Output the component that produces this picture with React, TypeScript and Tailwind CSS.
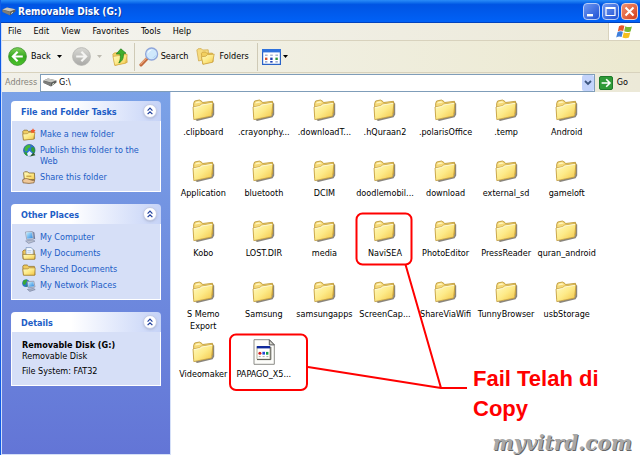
import React, { useState } from 'react';

interface Task {
  label: string;
  icon: React.ReactNode;
}

interface PanelProps {
  title: string;
  children: React.ReactNode;
}

interface FileEntry {
  name: string;
  kind?: 'folder' | 'app';
}

const files: FileEntry[] = [
  { name: '.clipboard' },
  { name: '.crayonphy...' },
  { name: '.downloadT...' },
  { name: '.hQuraan2' },
  { name: '.polarisOffice' },
  { name: '.temp' },
  { name: 'Android' },
  { name: 'Application' },
  { name: 'bluetooth' },
  { name: 'DCIM' },
  { name: 'doodlemobil...' },
  { name: 'download' },
  { name: 'external_sd' },
  { name: 'gameloft' },
  { name: 'Kobo' },
  { name: 'LOST.DIR' },
  { name: 'media' },
  { name: 'NaviSEA' },
  { name: 'PhotoEditor' },
  { name: 'PressReader' },
  { name: 'quran_android' },
  { name: 'S Memo Export' },
  { name: 'Samsung' },
  { name: 'samsungapps' },
  { name: 'ScreenCap...' },
  { name: 'ShareViaWifi' },
  { name: 'TunnyBrowser' },
  { name: 'usbStorage' },
  { name: 'Videomaker' },
  { name: 'PAPAGO_X5...', kind: 'app' },
];

const menus = ['File', 'Edit', 'View', 'Favorites', 'Tools', 'Help'];

// gradients shared by every icon on the page
const IconDefs = () => (
  <svg width="0" height="0" className="absolute" aria-hidden="true">
    <defs>
      <linearGradient id="folderFront" x1="0" y1="0" x2="1" y2="1">
        <stop offset="0" stopColor="#fffbc4" />
        <stop offset="0.5" stopColor="#fdea88" />
        <stop offset="1" stopColor="#f2c344" />
      </linearGradient>
      <linearGradient id="greenBall" x1="0" y1="0" x2="0" y2="1">
        <stop offset="0" stopColor="#7fd35a" />
        <stop offset="0.5" stopColor="#36a81f" />
        <stop offset="1" stopColor="#4cc42c" />
      </linearGradient>
      <linearGradient id="greyBall" x1="0" y1="0" x2="0" y2="1">
        <stop offset="0" stopColor="#d8d8d4" />
        <stop offset="1" stopColor="#a9a9a6" />
      </linearGradient>
      <linearGradient id="screen" x1="0" y1="0" x2="1" y2="1">
        <stop offset="0" stopColor="#c4f0ff" />
        <stop offset="1" stopColor="#2a86e0" />
      </linearGradient>
    </defs>
  </svg>
);

const FolderIcon = () => (
  <svg width="23" height="22" viewBox="0 0 23 22">
    <path d="M3 20.5 20 16.5 21 4 22.2 4.500 22.2 15.500 20.6 18.2 5 21.900z" fill="#6b675e" opacity="0.8" />
    <path d="M1.6 4.500 2.6 2 7.500 1 10 2.500 10.500 3.500 20.500 2.3 20.700 14 2 18z" fill="#f5d978" stroke="#b8922f" strokeWidth="0.8" />
    <path d="M3.2 4.500 3.800 3 7 2.3 9 3.500z" fill="#fff6c0" />
    <path d="M1 8 7.500 6.800 9.500 5.200 21 3.400 19.600 17 1.800 20.600z" fill="url(#folderFront)" stroke="#c29b38" strokeWidth="0.8" />
    <path d="M1.800 8.600 7.800 7.400 9.800 5.900 20 4.300" fill="none" stroke="#fffde4" strokeWidth="0.8" />
  </svg>
);

const AppFileIcon = () => (
  <svg width="22" height="26" viewBox="0 0 22 26">
    <path d="M1 .7h15.5l4.8 5v19.6H1z" fill="#fdfdfa" stroke="#8d8d88" />
    <path d="M16.3.8v5.1h5z" fill="#d4d4cc" stroke="#4f4f4f" strokeWidth="0.9" />
    <path d="M4 7.5h13v12.7H4z" fill="#fff" stroke="#b4b19c" />
    <path d="M3.8 7h13.4v2.4H3.8z" fill="#102a9c" />
    <path d="M4 20.6h13.8V8" fill="none" stroke="#56564e" />
    <circle cx="6.9" cy="14.3" r="1.5" fill="#d21f1f" />
    <path d="M9.4 12.8h2.6v2.8H9.4z" fill="#2346d8" />
    <path d="M13 12.9h2.4v2.8H13z" fill="#159a4a" />
    <path d="M5.7 17.6h2M9.6 17.6h2M13.4 17.6h2" stroke="#999" strokeWidth="0.8" />
  </svg>
);

const DriveIcon = () => (
  <svg width="14" height="9" viewBox="0 0 14 9">
    <path d="M.5 2.6 5 .6l8.5 1.8v2L8 8.4.5 4.8z" fill="#5e5e5c" />
    <path d="M.5 2.5 5 .5l8.5 1.8L8 4.6z" fill="#c6c6c1" />
    <path d="M.5 2.8 8 4.9v3.4L.5 5z" fill="#7d7d7a" />
    <path d="m9 6.6 2-1.4" stroke="#d9e8d0" strokeWidth="0.9" />
  </svg>
);

const BackIcon = () => (
  <svg width="19" height="19" viewBox="0 0 19 19">
    <circle cx="9.5" cy="9.5" r="8.9" fill="url(#greenBall)" stroke="#3b8f2d" strokeWidth="0.8" />
    <path d="M14.8 9.5H5.4M9.6 4.8 4.9 9.5l4.7 4.7" fill="none" stroke="#fff" strokeWidth="2.2" />
  </svg>
);

const ForwardIcon = () => (
  <svg width="19" height="19" viewBox="0 0 19 19">
    <circle cx="9.5" cy="9.5" r="8.9" fill="url(#greyBall)" stroke="#b5b5b1" strokeWidth="0.8" />
    <path d="M4.2 9.5h9.4M9.4 4.8l4.7 4.7-4.7 4.7" fill="none" stroke="#f4f4f2" strokeWidth="2.2" />
  </svg>
);

const UpIcon = () => (
  <svg width="16" height="18" viewBox="0 0 16 18">
    <path d="M.8 6.5 2 5l3-.4 1.2 1.2L14.6 6l.6 8.4L3 17.4z" fill="#f3d266" stroke="#cfa23a" strokeWidth="0.7" />
    <path d="M1 8.5 9 7.2l6.2-.6-1.5 8.6L2.7 17.3z" fill="url(#folderFront)" stroke="#cfa23a" strokeWidth="0.6" />
    <path d="M4.2 6 8.8.8 14 5.2l-2.6.4c.3 4.2-.8 7.6-4.6 9.4 1.6-2.6 1.9-5.6 1.3-9z" fill="#3fae2d" stroke="#1f7d1a" strokeWidth="0.7" />
  </svg>
);

const SearchIcon = () => (
  <svg width="20" height="20" viewBox="0 0 20 20">
    <path d="M2 17.8 8 11.6" stroke="#c2693c" strokeWidth="3.2" strokeLinecap="round" />
    <path d="m1.8 17 6-6.2" stroke="#eba77c" strokeWidth="1.2" strokeLinecap="round" />
    <circle cx="12.6" cy="7" r="6" fill="#cfe8fc" stroke="#8fa6da" strokeWidth="1.3" />
    <path d="M8.6 7c0-3 2.4-4.6 5-4.2-2 .6-4 2-5 4.2z" fill="#fff" />
    <path d="M16.8 7.6c-.2 2-1.9 3.6-4 3.6 2-.8 3-1.8 4-3.6z" fill="#94c4ee" />
  </svg>
);

const FoldersIcon = () => (
  <svg width="19" height="17" viewBox="0 0 19 17">
    <path d="M.8 2 2 .8l3.2-.2L6.6 2l5.6-.2.6 8.400L2.6 13z" fill="#f6dc80" stroke="#cda646" strokeWidth="0.7" />
    <path d="m5.4 5.6 1-1.4 3.2-.2 1.2 1.3 5.6-.2.8 8.4-10.4 2.6z" fill="#f2d060" stroke="#c79b38" strokeWidth="0.7" />
    <path d="m5.4 8.8 4.4-.6 1.6-1.5 6.8-.6-1.6 8.2-9.6 2z" fill="url(#folderFront)" stroke="#c79b38" strokeWidth="0.7" />
  </svg>
);

const ViewsIcon = () => (
  <svg width="19" height="16" viewBox="0 0 19 16">
    <path d="M.6.6h17.8v14.8H.6z" fill="#fff" stroke="#2a63c8" strokeWidth="1.2" />
    <path d="M0 0h19v3.4H0z" fill="#2f72dc" />
    <path d="M3 5.4h2.6V7H3zM8.2 5.4h2.6V7H8.2zM13.4 5.4H16V7h-2.6z" fill="#a9b7d4" />
    <path d="M3 8.6h2.4V11H3z" fill="#d9502c" />
    <path d="M8.2 8.6h2.4V11H8.2z" fill="#1e3fb2" />
    <path d="M13.4 8.6h2.4V11h-2.4z" fill="#2c9a3c" />
    <path d="M3 12.2h2.4v1.4H3zM13.4 12.2h2.4v1.4h-2.4z" fill="#7d93c4" />
    <path d="M8.2 12h2.4v1.6H8.2z" fill="#1e3fb2" />
  </svg>
);

const WindowsFlag = () => (
  <svg width="17" height="16" viewBox="0 0 17 16">
    <path d="M3 2.2C5 .8 6.6.9 8.4 1.8L7.2 7C5.4 6.2 3.8 6.2 1.8 7.4z" fill="#e8562a" />
    <path d="M9.3 2.2c2 1 4 1.2 6.6.2l-1.3 5c-2.4 1-4.4.9-6.4-.1z" fill="#7ab833" />
    <path d="M1.5 8.2c2-1.2 3.6-1.3 5.4-.4L5.6 13c-1.8-.9-3.4-.8-5.4.4z" fill="#3f7fdc" />
    <path d="M7.8 8.2c2 1 4 1.2 6.5.2L13 13.6c-2.4 1-4.500.9-6.500-.1z" fill="#f6bf1d" />
  </svg>
);

const GoIcon = () => (
  <svg width="14" height="14" viewBox="0 0 14 14">
    <rect x="0.5" y="0.5" width="13" height="13" rx="1.5" fill="#2f9a38" stroke="#1d7a2a" />
    <path d="M2.6 7h8M7.2 3.2 11 7l-3.8 3.8" fill="none" stroke="#fff" strokeWidth="1.6" />
  </svg>
);

const Caret = ({ className = 'fill-black' }: { className?: string }) => (
  <svg width="5" height="3" viewBox="0 0 5 3" className={className}>
    <path d="M0 0h5L2.5 3z" />
  </svg>
);

const NewFolderIcon = () => (
  <svg width="14" height="13" viewBox="0 0 14 13">
    <path d="M.8 3.4 2 2.2h3.2l1.2 1.2H12l.4 7.4L1.4 12z" fill="#f0cc62" stroke="#8d6e28" strokeWidth="0.8" />
    <path d="m.8 6 4.6-.4L7 4.4l6-.2-1.4 7L1.6 12z" fill="url(#folderFront)" stroke="#a5802f" strokeWidth="0.6" />
    <path d="m11 .2.8 1.6 1.8.4-1.4 1.2.2 1.8L11 4.4l-1.8.8.4-1.8L8.4 2.2l1.8-.4z" fill="#f0582a" />
  </svg>
);

const GlobeIcon = () => (
  <svg width="13" height="13" viewBox="0 0 13 13">
    <circle cx="6.3" cy="6.2" r="5.7" fill="#2b74d4" stroke="#1d4f8d" strokeWidth="0.7" />
    <path d="M2 3.2C3.4 1.2 5.6.8 7.6 1.2L7 3.4 5 4.6l-.4 2.2-2.2.8C1.2 6 1.4 4.4 2 3.2z" fill="#45b83a" />
    <path d="m8.6 3 2.4.4c1 1.6 1.2 3.6.4 5.4l-1.6-.4L8 6.2z" fill="#2f9e33" />
    <path d="M4 9.4 6.4 7l3 2.6-1.6 2.2-3 .2z" fill="#e6efff" />
    <path d="M1 8.400 3.6 8l1 3.800C2.800 11.400 1.600 10 1 8.400z" fill="#2f9e33" />
    <path d="m7 12.4 5.4-1.2-2-2.8z" fill="#2d5e2c" />
  </svg>
);

const ShareFolderIcon = () => (
  <svg width="14" height="13" viewBox="0 0 14 13">
    <path d="M1.6 1.8 2.6.8h3l1.2 1.2h5.6l.4 6.4-10.4.8z" fill="url(#folderFront)" stroke="#7d6328" strokeWidth="0.8" />
    <path d="M.6 8.8c2-1.2 3.6-1.6 5-1l5.4 1.8 1.6-.6-.6 2.8-5 .6-6-.6z" fill="#f0c99a" stroke="#7a5528" strokeWidth="0.7" />
    <path d="M4.4 5.2h5" stroke="#b98c34" />
  </svg>
);

const ComputerIcon = () => (
  <svg width="13" height="13" viewBox="0 0 13 13">
    <path d="m2.4 1 7-.6 1.4 7.4-7 1z" fill="#d9dce4" stroke="#8b93a8" strokeWidth="0.7" />
    <path d="m3.2 1.6 5.6-.4 1 5.800-5.600.8z" fill="url(#screen)" />
    <path d="m10 .8 1.4.8.8 6.6-1.4-.4z" fill="#707c9c" />
    <path d="m2.6 10 7.4-1.2 2 1.4-6.4 2.2z" fill="#b9bfcf" stroke="#7b86a2" strokeWidth="0.6" />
  </svg>
);

const DocumentsIcon = () => (
  <svg width="14" height="13" viewBox="0 0 14 13">
    <path d="M.8 4.2 2 3h10l1 8.8H1z" fill="#eec75c" stroke="#94752c" strokeWidth="0.8" />
    <path d="M4 .6h5l2.2 2V9H4z" fill="#f6fbff" stroke="#6f8db8" strokeWidth="0.7" />
    <path d="M5.4 3.6h4M5.4 5.2h4" stroke="#9db9e2" strokeWidth="0.7" />
    <path d="M.8 7.4h12.4l-.6 4.9H1.4z" fill="url(#folderFront)" stroke="#94752c" strokeWidth="0.7" />
  </svg>
);

const SharedIcon = () => (
  <svg width="14" height="12" viewBox="0 0 14 12">
    <path d="m.8 2.4 1-1.4h3.4l1.4 1.4h5.8l.6 8.6H1.4z" fill="#efca5e" stroke="#94752c" strokeWidth="0.8" />
    <path d="m.8 5 5-.2L7.2 3.8h6l-.6 7.4H1.6z" fill="url(#folderFront)" stroke="#a5802f" strokeWidth="0.7" />
  </svg>
);

const NetworkIcon = () => (
  <svg width="14" height="13" viewBox="0 0 14 13">
    <circle cx="4" cy="4.2" r="3.8" fill="#2d74cf" />
    <path d="M.8 3C1.8.8 3.6.2 5.4.7L4.6 3l-1.4 2.8L1 5.4zM3 7l2.4-.8L5 7.8z" fill="#38a836" />
    <path d="m5.2 2.6 6.6-.4 1.2 5.8-6.6.8z" fill="#d9dce4" stroke="#8089a2" strokeWidth="0.7" />
    <path d="m6 3.2 5.200-.3.9 4.400-5.200.6z" fill="url(#screen)" />
    <path d="m5.4 10.4 6.2-1 1.6 1.2-5.4 1.8z" fill="#aab3ca" stroke="#6f7a98" strokeWidth="0.6" />
  </svg>
);

const folderTasks: Task[] = [
  { label: 'Make a new folder', icon: <NewFolderIcon /> },
  { label: 'Publish this folder to the Web', icon: <GlobeIcon /> },
  { label: 'Share this folder', icon: <ShareFolderIcon /> },
];

const places: Task[] = [
  { label: 'My Computer', icon: <ComputerIcon /> },
  { label: 'My Documents', icon: <DocumentsIcon /> },
  { label: 'Shared Documents', icon: <SharedIcon /> },
  { label: 'My Network Places', icon: <NetworkIcon /> },
];

const Panel: React.FC<PanelProps> = ({ title, children }) => {
  const [isOpen, setIsOpen] = useState(true);

  return (
    <section>
      <header className="flex h-5 items-center justify-between rounded-t-sm bg-linear-to-r from-white from-40% to-[#c6d3f7] pr-1 pl-2.5">
        <h2 className="pt-1 text-[9px] font-bold text-[#215dc6]">{title}</h2>
        <button
          aria-label={`Toggle ${title}`}
          onClick={() => setIsOpen(!isOpen)}
          className="flex size-3.5 items-center justify-center rounded-full border border-[#c3cbe6] bg-white shadow-sm"
        >
          <svg width="6" height="8" viewBox="0 0 6 8" fill="none" stroke="#1f3f9c" strokeWidth="1.2">
            <path d="M.6 3.6 3 1.2l2.4 2.4M.6 7.2 3 4.8l2.4 2.4" />
          </svg>
        </button>
      </header>
      {isOpen && <div className="border border-t-0 border-white bg-[#d6dff7]">{children}</div>}
    </section>
  );
};

const TaskList = ({ tasks }: { tasks: Task[] }) => (
  <ul className="flex flex-col gap-[5px] py-2 pl-2.5">
    {tasks.map(task => (
      <li key={task.label}>
        <a href="#" className="flex gap-1 leading-[11px] text-[#215dc6] hover:underline">
          <span className="flex h-[11px] w-3.5 shrink-0 items-center justify-center">{task.icon}</span>
          <span className="w-28">{task.label}</span>
        </a>
      </li>
    ))}
  </ul>
);

const TitleBar = () => (
  <header className="flex h-[23px] items-center justify-between bg-linear-to-b from-[#2a8cf8] via-[#0054e3] via-20% to-[#0062f8] pr-0.5 pl-px shadow-[inset_0_-1px_0_#0242bd]">
    <div className="flex items-center gap-0.5">
      <DriveIcon />
      <h1 className="text-[10px] font-bold text-white [text-shadow:1px_1px_0_#0f3a9a]">Removable Disk (G:)</h1>
    </div>
    <div className="flex gap-0.5 text-white">
      <button aria-label="Minimize" className="size-[17px] rounded-sm border border-[#b9cdf7] bg-linear-to-br from-[#6f97f0] to-[#1f4fd4]">
        <svg width="15" height="15" viewBox="0 0 15 15"><path d="M3 10h6v2.4H3z" fill="#fff" /></svg>
      </button>
      <button aria-label="Maximize" className="size-[17px] rounded-sm border border-[#b9cdf7] bg-linear-to-br from-[#6f97f0] to-[#1f4fd4]">
        <svg width="15" height="15" viewBox="0 0 15 15"><path d="M3 3.5h9v8H3zM3 4.5h9" fill="none" stroke="#fff" strokeWidth="1.2" /></svg>
      </button>
      <button aria-label="Close" className="size-[17px] rounded-sm border border-[#f3cfc6] bg-linear-to-br from-[#f0906e] to-[#d43a12]">
        <svg width="15" height="15" viewBox="0 0 15 15"><path d="m3.5 3.5 8 8m0-8-8 8" stroke="#fff" strokeWidth="2" /></svg>
      </button>
    </div>
  </header>
);

const MenuBar = () => (
  <nav className="flex h-[18px] items-stretch justify-between border-b border-[#d8d2bd] bg-linear-to-r from-[#f4f4f0] to-[#ece9d8]">
    <div className="flex items-center gap-3 pl-1.5">
      {menus.map(menu => (
        <button key={menu}>{menu}</button>
      ))}
    </div>
    <div className="flex w-8 items-center justify-center border-l border-[#d8d2bd] bg-white">
      <WindowsFlag />
    </div>
  </nav>
);

const Toolbar = () => (
  <div className="flex h-8 items-center border-b border-[#d8d2bd] bg-linear-to-r from-[#f4f4f0] to-[#ece9d0] pl-1.5">
    <button className="flex items-center gap-1"><BackIcon />Back</button>
    <button aria-label="Back history" className="px-1.5"><Caret /></button>
    <button aria-label="Forward" className="ml-1"><ForwardIcon /></button>
    <button aria-label="Forward history" className="px-1.5"><Caret className="fill-[#bdbab0]" /></button>
    <button aria-label="Up" className="ml-1 pr-1.5"><UpIcon /></button>
    <div className="flex h-7 items-center gap-2 border-x border-[#cfcab6] px-1">
      <button className="flex items-center gap-0.5"><SearchIcon />Search</button>
      <button className="flex items-center gap-1 pr-1"><FoldersIcon />Folders</button>
    </div>
    <button aria-label="Views" className="flex items-center gap-0.5 pl-1"><ViewsIcon /><Caret /></button>
  </div>
);

const AddressBar = () => {
  const [path, setPath] = useState('G:\\');

  return (
    <form className="flex h-[19px] items-center bg-linear-to-r from-[#f1f0e8] to-[#ece9d8]" onSubmit={e => e.preventDefault()}>
      <label htmlFor="address" className="w-[38px] pl-[3px] text-[#85837b]">Address</label>
      <div className="flex h-[18px] flex-1 items-center border border-[#7f9db9] bg-white pl-0.5">
        <DriveIcon />
        <input
          id="address"
          value={path}
          onChange={e => setPath(e.target.value)}
          className="min-w-0 flex-1 pl-0.5 outline-none"
        />
        <button type="button" aria-label="Show addresses" className="flex h-4 w-3 items-center justify-center rounded-xs bg-[#c3d3fb]">
          <svg width="8" height="6" viewBox="0 0 8 6"><path d="m1 1 3 3 3-3" fill="none" stroke="#3c5580" strokeWidth="1.8" /></svg>
        </button>
      </div>
      <button className="flex items-center gap-1 pr-3 pl-1"><GoIcon />Go</button>
    </form>
  );
};

const Callout = () => (
  <>
    <svg
      width="469"
      height="363"
      viewBox="171 92 469 363"
      fill="none"
      stroke="#f00"
      strokeWidth="2"
      className="pointer-events-none absolute top-0 left-0"
    >
      <rect x="356.5" y="213.5" width="55" height="51" rx="6" />
      <rect x="230" y="334.5" width="77" height="55.5" rx="6" />
      <path d="M405.500 264.500 441 388H467M308 367 441 388" />
    </svg>
    <p className="absolute top-[272px] left-[302px] w-36 font-['Liberation_Sans',Arial,sans-serif] text-[22px] leading-[30px] font-bold text-[#f00]">
      Fail Telah di Copy
    </p>
    <p className="absolute right-2 bottom-0 font-['DejaVu_Serif',serif] text-[20px] leading-6 font-bold text-[#a8a8a8] italic [text-shadow:1px_1px_0_#666]">
      myvitrd.com
    </p>
  </>
);

const App = () => {
  return (
    <div className="flex min-h-screen flex-col border-l border-[#0f5be6] bg-white font-['DejaVu_Sans_Condensed','DejaVu_Sans',sans-serif] text-[9px] text-black">
      <IconDefs />
      <TitleBar />
      <div className="flex flex-1 flex-col border-l border-[#cfdefa]">
        <MenuBar />
        <Toolbar />
        <AddressBar />
        <div className="flex flex-1">
          <aside className="flex w-[169px] shrink-0 flex-col gap-3 border-r border-b border-[#d5e0f8] bg-linear-to-b from-[#7ba2e7] to-[#6375d6] px-[9px] pt-[9px]">
            <Panel title="File and Folder Tasks">
              <TaskList tasks={folderTasks} />
            </Panel>
            <Panel title="Other Places">
              <TaskList tasks={places} />
            </Panel>
            <Panel title="Details">
              <div className="flex flex-col px-2.5 py-2 leading-[11px]">
                <strong>Removable Disk (G:)</strong>
                <span>Removable Disk</span>
                <span className="pt-1">File System: FAT32</span>
              </div>
            </Panel>
          </aside>
          <main className="relative flex-1 pt-[5px] pl-0.5">
            <div className="grid h-[303px] w-[424px] grid-cols-7 grid-rows-5">
              {files.map(file => (
                <button key={file.name} className="flex min-w-0 flex-col items-center justify-start">
                  <span className="flex h-[26px] shrink-0 items-center">
                    {file.kind === 'app' ? <AppFileIcon /> : <FolderIcon />}
                  </span>
                  <span className="px-1 pt-[3px] leading-3">{file.name}</span>
                </button>
              ))}
            </div>
            <Callout />
          </main>
        </div>
      </div>
    </div>
  );
};

export default App;
